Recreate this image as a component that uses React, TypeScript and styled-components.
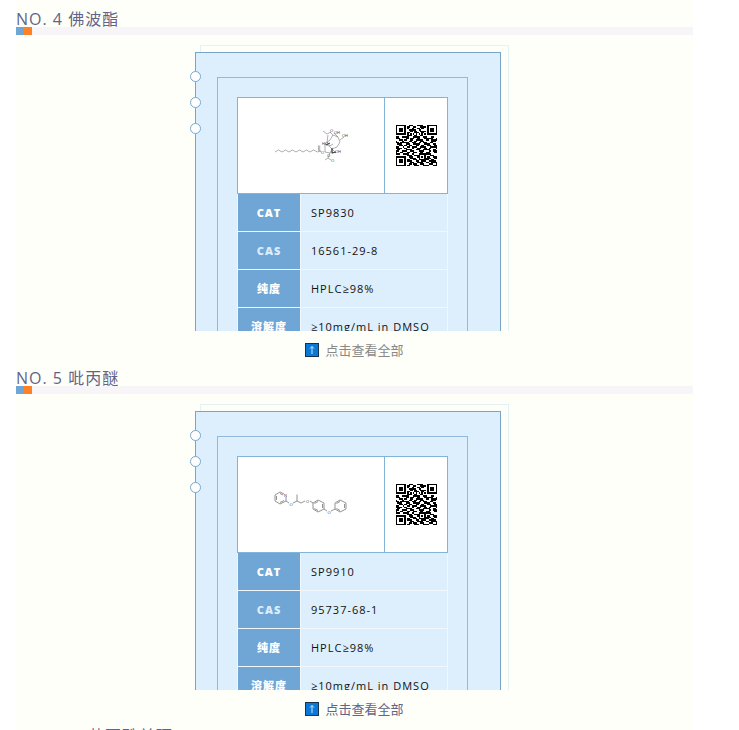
import React from "react";
import styled, { createGlobalStyle } from "styled-components";

const GlobalStyle = createGlobalStyle`
  * { box-sizing: border-box; }
  body {
    margin: 0;
    background: #fff;
    font-family: "Open Sans", "Noto Sans CJK SC", sans-serif;
  }
`;

const Page = styled.main`
  height: 100vh;
  overflow: hidden;
  margin: 0 46px 0 16px;
  background: #fffffa;
`;

const Section = styled.section`
  display: flex;
  flex-direction: column;
  height: 359px;
`;

const Title = styled.h2<{ $indent?: boolean }>`
  flex: none;
  margin: 0;
  padding: ${(p) => (p.$indent ? "7px 0 0 72px" : "8px 0 0")};
  height: 27px;
  font-size: 16px;
  line-height: 22px;
  font-weight: 400;
  letter-spacing: 1px;
  color: #5f6488;
  white-space: nowrap;
`;

const Rule = styled.div`
  display: flex;
  flex: none;
  height: 8px;
  background: #f7f5f8;
`;

const Chip = styled.span<{ $color: string }>`
  width: 8px;
  background: ${(p) => p.$color};
`;

const Preview = styled.div`
  flex: none;
  height: 296px;
  padding-top: 10px;
  overflow: hidden;
`;

const Frame = styled.div`
  width: 309px;
  max-width: 100%;
  margin: 0 auto;
  border: 1px solid #e3f2f2;
`;

const Card = styled.article`
  position: relative;
  margin: 6px 7px 0 -6px;
  padding: 24px 32px 0 21px;
  border: 1px solid #77a5c9;
  background: #ddeffc;
`;

const Rings = styled.div`
  position: absolute;
  top: 18px;
  left: -6px;
  display: flex;
  flex-direction: column;
  gap: 15px;
`;

const Ring = styled.span`
  width: 11px;
  height: 11px;
  border: 1px solid #77a8d0;
  border-radius: 50%;
  background: #fff;
`;

const Inner = styled.div`
  padding: 19px;
  border: 1px solid #8fbadd;
`;

const Figures = styled.div`
  display: flex;
  height: 97px;
  border: 1px solid #82b3d9;
  background: #fff;
`;

const Structure = styled.div`
  flex: 1;
  display: flex;
  align-items: center;
  justify-content: center;
  border-right: 1px solid #82b3d9;
`;

const CodeCell = styled.div`
  width: 62px;
  display: flex;
  align-items: center;
  justify-content: center;
`;

const Specs = styled.table`
  width: 100%;
  table-layout: fixed;
  border-spacing: 0;
  border: 1px solid #f0f8fe;
  border-top: 0;
  font-size: 11px;
  line-height: 16px;
  letter-spacing: 1px;
`;

const SpecName = styled.th<{ $soft?: boolean }>`
  width: 63px;
  height: 38px;
  padding: 0;
  border-right: 1px solid #f0f8fe;
  border-bottom: 1px solid #f0f8fe;
  background: #6fa6d5;
  color: ${(p) => (p.$soft ? "#dcecfb" : "#fff")};
  font-weight: 900;
`;

const SpecValue = styled.td`
  padding: 0 0 0 10px;
  border-bottom: 1px solid #f0f8fe;
  color: #111;
  white-space: nowrap;
`;

const More = styled.button<{ $color: string }>`
  display: flex;
  align-items: center;
  align-self: center;
  gap: 6px;
  margin-top: 10px;
  padding: 0;
  border: 0;
  background: none;
  font: 13px/18px "Noto Sans CJK SC", sans-serif;
  color: ${(p) => p.$color};
`;

const QR_ROWS = [
  "11111110011100011110001111111",
  "10000010110011000111101000001",
  "10111010100110011011001011101",
  "10111010011111001100001011101",
  "10111010001101100111101011101",
  "10000010110001110011001000001",
  "11111110101010101010101111111",
  "00000000111001100110000000000",
  "11001111100011111001110001100",
  "11100001101110011000111111001",
  "00111011001100111110011001111",
  "10001100011001100111000001110",
  "11011111100111001101110011000",
  "01110001110011111000111100110",
  "00111011011000110011001110011",
  "11000100110111100111100011111",
  "11110011000110011100110110001",
  "01100001111000111001111100110",
  "11001111001110001111000110111",
  "10011000110011100110011100011",
  "11100111100110001111111110000",
  "00000000111001111000100011100",
  "11111110011100011010101100111",
  "10000010001111001000111110011",
  "10111010110011101111111001100",
  "10111010111000110011100111110",
  "10111010001110011110011001111",
  "10000010011011100111000111001",
  "11111110110001110001111000111",
];

const QrCode = () => (
  <svg
    width="41"
    height="41"
    viewBox="0 0 29 29"
    shapeRendering="crispEdges"
    role="img"
    aria-label="QR code"
  >
    <path
      fill="#000"
      d={QR_ROWS.map((row, y) =>
        [...row].map((c, x) => (c === "1" ? `M${x} ${y}h1v1h-1z` : "")).join("")
      ).join("")}
    />
  </svg>
);

const Atom = styled.text`
  font: 4px "Liberation Sans", sans-serif;
  fill: #444;
  stroke: none;
`;

const Phorbol = () => (
  <svg width="74" height="36" viewBox="0 0 74 36" fill="none" stroke="#777" strokeWidth=".6" role="img" aria-label="Phorbol ester structure">
    <path d="M1 24l3.5-2 3.5 2 3.5-2 3.5 2 3.5-2 3.5 2 3.5-2 3.5 2 3.5-2 3.5 2 3.5-2 4 2 3-1.500M44.500 22.500v-5M45.700 22.500v-5M44.500 22.500l3 1.500" />
    <path d="M51 24v-8l5-4 3-5 5 2 2 5-3 5-5 2-2 4-5-1M51 16l4 2 3 3M54 7l-1 7M49 3l4 3 4-2M59 7l-3-3M66 12l4-3M58 21l4 4M56 25l-2 5-3 2M54 30l3 2M58 21v5M53 14l3 4 3-2M64 9l-4-4" />
    <path stroke="#333" strokeWidth="1" d="M58 20v5l4-1M52 17l4-2" />
    <Atom x="47" y="26">O</Atom>
    <Atom x="48" y="17">HO</Atom>
    <Atom x="60" y="6">OH</Atom>
    <Atom x="68" y="9">OH</Atom>
    <Atom x="61" y="25">OH</Atom>
    <Atom x="53" y="29">O</Atom>
    <Atom x="57" y="34">O</Atom>
    <Atom x="56" y="4">O</Atom>
  </svg>
);

const Pyriproxyfen = () => (
  <svg width="74" height="27" viewBox="0 0 74 27" fill="none" stroke="#777" strokeWidth=".8" role="img" aria-label="Pyriproxyfen structure">
    <path d="M10 3L6 1 1 4v6l5 3 6-3V6M2.500 5v4M6 11.500l4-2M6 2.500l3 1.500M12 10l3 2M19 12l4-2V3.500M23 10l4 2 4-2" />
    <path d="M36 10l3 2M44 9l-5 3v6l5 3 6-3v-6zM44 10.500l-3.500 2M40.500 17.500l3.500 2M48.500 13v4M50 18l3 2M57 20l4-2" />
    <path d="M66 9l-5 3v6l5 3 6-3v-6zM66 10.500l-3.500 2M62.500 17.500l3.500 2M70.500 13v4" />
    <Atom x="10" y="6">N</Atom>
    <Atom x="15.500" y="15">O</Atom>
    <Atom x="32" y="11.500">O</Atom>
    <Atom x="53.500" y="23">O</Atom>
  </svg>
);

const UpIcon = () => (
  <svg width="14" height="14" viewBox="0 0 14 14" aria-hidden="true">
    <rect x=".5" y=".5" width="13" height="13" fill="#0a78d6" stroke="#17324d" />
    <path d="M7 11V3.500M5 5.500l2-2 2 2" fill="none" stroke="#cfe8fb" />
  </svg>
);

interface Product {
  title: string;
  cat: string;
  cas: string;
  drawing: React.ReactNode;
  moreColor: string;
}

const PRODUCTS: Product[] = [
  { title: "NO. 4 佛波酯", cat: "SP9830", cas: "16561-29-8", drawing: <Phorbol />, moreColor: "#888" },
  { title: "NO. 5 吡丙醚", cat: "SP9910", cas: "95737-68-1", drawing: <Pyriproxyfen />, moreColor: "#5f6488" },
];

const ProductSection = ({ title, cat, cas, drawing, moreColor }: Product) => (
  <Section>
    <Title>{title}</Title>
    <Rule>
      <Chip $color="#6fa6d5" />
      <Chip $color="#ff8127" />
    </Rule>
    <Preview>
      <Frame>
        <Card>
          <Rings>
            <Ring />
            <Ring />
            <Ring />
          </Rings>
          <Inner>
            <Figures>
              <Structure>{drawing}</Structure>
              <CodeCell>
                <QrCode />
              </CodeCell>
            </Figures>
            <Specs>
              <tbody>
                <tr>
                  <SpecName scope="row">CAT</SpecName>
                  <SpecValue>{cat}</SpecValue>
                </tr>
                <tr>
                  <SpecName scope="row" $soft>CAS</SpecName>
                  <SpecValue>{cas}</SpecValue>
                </tr>
                <tr>
                  <SpecName scope="row">纯度</SpecName>
                  <SpecValue>HPLC≥98%</SpecValue>
                </tr>
                <tr>
                  <SpecName scope="row">溶解度</SpecName>
                  <SpecValue>≥10mg/mL in DMSO</SpecValue>
                </tr>
              </tbody>
            </Specs>
          </Inner>
        </Card>
      </Frame>
    </Preview>
    <More type="button" $color={moreColor}>
      <UpIcon />
      点击查看全部
    </More>
  </Section>
);

export default function App() {
  return (
    <>
      <GlobalStyle />
      <Page>
        {PRODUCTS.map((p) => (
          <ProductSection key={p.cat} {...p} />
        ))}
        <Title $indent>苯丙酰并环</Title>
      </Page>
    </>
  );
}
